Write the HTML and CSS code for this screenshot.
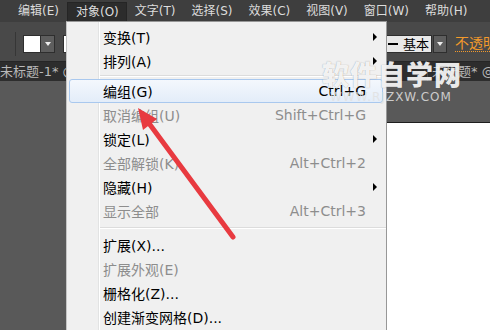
FILE: index.html
```html
<!DOCTYPE html>
<html lang="zh-CN">
<head>
    <meta charset="UTF-8">
    <title>对象菜单</title>
    <link rel="stylesheet" href="styles.css">
</head>
<body>
    <div class="menubar">
        <span class="mb-item">编辑(E)</span>
        <span class="mb-item open">对象(O)</span>
        <span class="mb-item">文字(T)</span>
        <span class="mb-item">选择(S)</span>
        <span class="mb-item">效果(C)</span>
        <span class="mb-item">视图(V)</span>
        <span class="mb-item">窗口(W)</span>
        <span class="mb-item">帮助(H)</span>
    </div>

    <div class="toolbar">
        <span class="tb-sep"></span>
        <span class="swatch"></span>
        <span class="dd"><i></i></span>
        <span class="swatch second"></span>
        <span class="stroke-box"><b class="dash"></b>基本</span>
        <span class="dd"><i></i></span>
        <span class="opacity">不透明度:</span>
    </div>

    <div class="tabs">
        <span class="tab first">未标题-1* @ 50% (CMYK/预览)</span>
        <span class="tab">未标题* @ 66.67%</span>
    </div>

    <div class="workspace">
        <div class="artboard"></div>
    </div>

    <div class="menu">
        <div class="item"><span>变换(T)</span><span></span><span class="sub"></span></div>
        <div class="item"><span>排列(A)</span><span></span><span class="sub"></span></div>
        <div class="sep"></div>
        <div class="item active"><span>编组(G)</span><span class="key">Ctrl+G</span><span></span></div>
        <div class="item off"><span>取消编组(U)</span><span class="key">Shift+Ctrl+G</span><span></span></div>
        <div class="item"><span>锁定(L)</span><span></span><span class="sub"></span></div>
        <div class="item off"><span>全部解锁(K)</span><span class="key">Alt+Ctrl+2</span><span></span></div>
        <div class="item"><span>隐藏(H)</span><span></span><span class="sub"></span></div>
        <div class="item off"><span>显示全部</span><span class="key">Alt+Ctrl+3</span><span></span></div>
        <div class="sep wide"></div>
        <div class="item"><span>扩展(X)...</span><span></span><span></span></div>
        <div class="item off"><span>扩展外观(E)</span><span></span><span></span></div>
        <div class="item"><span>栅格化(Z)...</span><span></span><span></span></div>
        <div class="item"><span>创建渐变网格(D)...</span><span></span><span></span></div>
    </div>

    <div class="watermark">
        <div class="wm-big">软件自学网</div>
        <div class="wm-small">WWW.RJZXW.COM</div>
    </div>

    <svg class="arrow" width="490" height="330" viewBox="0 0 490 330">
        <line x1="148" y1="122" x2="233" y2="237" stroke="#e83a40" stroke-width="5" stroke-linecap="round"/>
        <polygon points="138,108 157,119 143,130" fill="#e83a40"/>
    </svg>
</body>
</html>
```

FILE: styles.css
```css
body {
    margin: 0;
    width: 490px;
    height: 330px;
    overflow: hidden;
    position: relative;
    font-family: "DejaVu Sans", "Noto Sans CJK SC", sans-serif;
    background: #595959;
}

/* top menu bar */
.menubar {
    height: 22px;
    background: #3e3e3e;
    display: flex;
    align-items: center;
    padding-left: 10px;
    font-size: 12px;
    color: #dcdcdc;
    white-space: nowrap;
}
.mb-item {
    flex-shrink: 0;
    padding: 0 8px;
    height: 20px;
    line-height: 20px;
    box-sizing: border-box;
}
.mb-item.open {
    background: #2c2c2c;
    border: 1px solid #252525;
    border-bottom: none;
    line-height: 19px;
    padding: 0 7px 0 8px;
    margin-top: 2px;
}

/* control bar */
.toolbar {
    height: 39px;
    background: #494949;
    display: flex;
    align-items: center;
    white-space: nowrap;
    overflow: hidden;
    padding-left: 15px;
    padding-top: 4px;
    box-sizing: border-box;
}
.toolbar > span {
    flex-shrink: 0;
}
.tb-sep {
    width: 1px;
    height: 24px;
    background: #363636;
    margin-right: 7px;
}
.swatch {
    width: 18px;
    height: 18px;
    background: #fff;
    border: 1px solid #2e2e2e;
    box-sizing: border-box;
}
.swatch.second {
    margin-left: 8px;
    width: 22px;
}
.dd {
    width: 14px;
    height: 18px;
    background: #5e5e5e;
    border: 1px solid #2e2e2e;
    border-left: none;
    box-sizing: border-box;
    display: flex;
    align-items: center;
    justify-content: center;
}
.dd i {
    border-top: 4px solid #eee;
    border-left: 3px solid transparent;
    border-right: 3px solid transparent;
}
.stroke-box {
    margin-left: 300px;
    width: 47px;
    height: 18px;
    background: #e8e8e8;
    border: 1px solid #2e2e2e;
    box-sizing: border-box;
    display: flex;
    align-items: center;
    font-size: 13px;
    color: #000;
    margin-right: 1px;
}
.dash {
    width: 10px;
    height: 2px;
    background: #000;
    margin: 0 5px 0 2px;
}
.stroke-box + .dd {
    border-left: 1px solid #2e2e2e;
}
.opacity {
    margin-left: 8px;
    font-size: 14px;
    color: #f39a2b;
    border-bottom: 1px dotted #f39a2b;
    line-height: 16px;
}

/* document tabs */
.tabs {
    height: 20px;
    background: #2d2d2d;
    border-top: 1px solid #262626;
    box-sizing: border-box;
    display: flex;
    font-size: 13px;
    color: #b9b9b9;
    white-space: nowrap;
    overflow: hidden;
}
.tab {
    flex-shrink: 0;
    line-height: 19px;
    overflow: hidden;
}
.tab.first {
    width: 428px;
    box-sizing: border-box;
    border-right: 1px solid #4a4a4a;
}
.tab + .tab {
    padding-left: 4px;
}

/* canvas */
.workspace {
    height: 249px;
    padding: 41px 0 0 300px;
    box-sizing: border-box;
}
.artboard {
    height: 100%;
    background: #fff;
    border-top: 1px solid #1e1e1e;
}

/* dropdown menu */
.menu {
    position: absolute;
    left: 66px;
    top: 21px;
    width: 321px;
    height: 320px;
    box-sizing: border-box;
    border: 1px solid #979797;
    border-left-color: #c4c4c4;
    padding-top: 3px;
    background: linear-gradient(to right, #f0f0f0 31px, #e2e3e3 31px, #e2e3e3 32px, #fff 32px, #fff 33px, #f0f0f0 33px);
    font-size: 14px;
    color: #000;
}
.item {
    height: 24px;
    box-sizing: border-box;
    display: grid;
    grid-template-columns: 1fr auto 20px;
    align-items: center;
    padding-left: 36px;
    white-space: nowrap;
}
.item.off {
    color: #8d8d8d;
}
.item.active {
    margin: 0 3px 0 2px;
    padding-left: 33px;
    grid-template-columns: 1fr auto 16px;
    border: 1px solid #a9c8ee;
    border-radius: 3px;
    background: linear-gradient(to bottom, #f4f8fd, #e3edf9);
}
.key {
    text-align: right;
}
.sub {
    justify-self: start;
    margin-left: 7px;
    width: 0;
    height: 0;
    border-left: 4px solid #000;
    border-top: 4px solid transparent;
    border-bottom: 4px solid transparent;
}
.sep {
    height: 6px;
    margin-left: 33px;
    box-sizing: border-box;
    padding-top: 2px;
}
.sep::before {
    content: "";
    display: block;
    height: 1px;
    background: #dcdcdc;
    border-bottom: 1px solid #fff;
}
.sep.wide {
    height: 10px;
    padding-top: 4px;
}

/* overlays */
.watermark {
    position: absolute;
    left: 322px;
    top: 58px;
}
.wm-big {
    font-family: "Noto Sans CJK SC", sans-serif;
    font-weight: 900;
    font-size: 27px;
    line-height: 32px;
    letter-spacing: 1px;
    color: rgba(255, 255, 255, 0.9);
    text-shadow: 0 0 1px rgba(90, 90, 90, 0.6);
}
.wm-small {
    margin-left: 8px;
    font-size: 12px;
    letter-spacing: 1px;
    line-height: 14px;
    color: rgba(225, 225, 225, 0.85);
}
.arrow {
    position: absolute;
    left: 0;
    top: 0;
    pointer-events: none;
}
```
